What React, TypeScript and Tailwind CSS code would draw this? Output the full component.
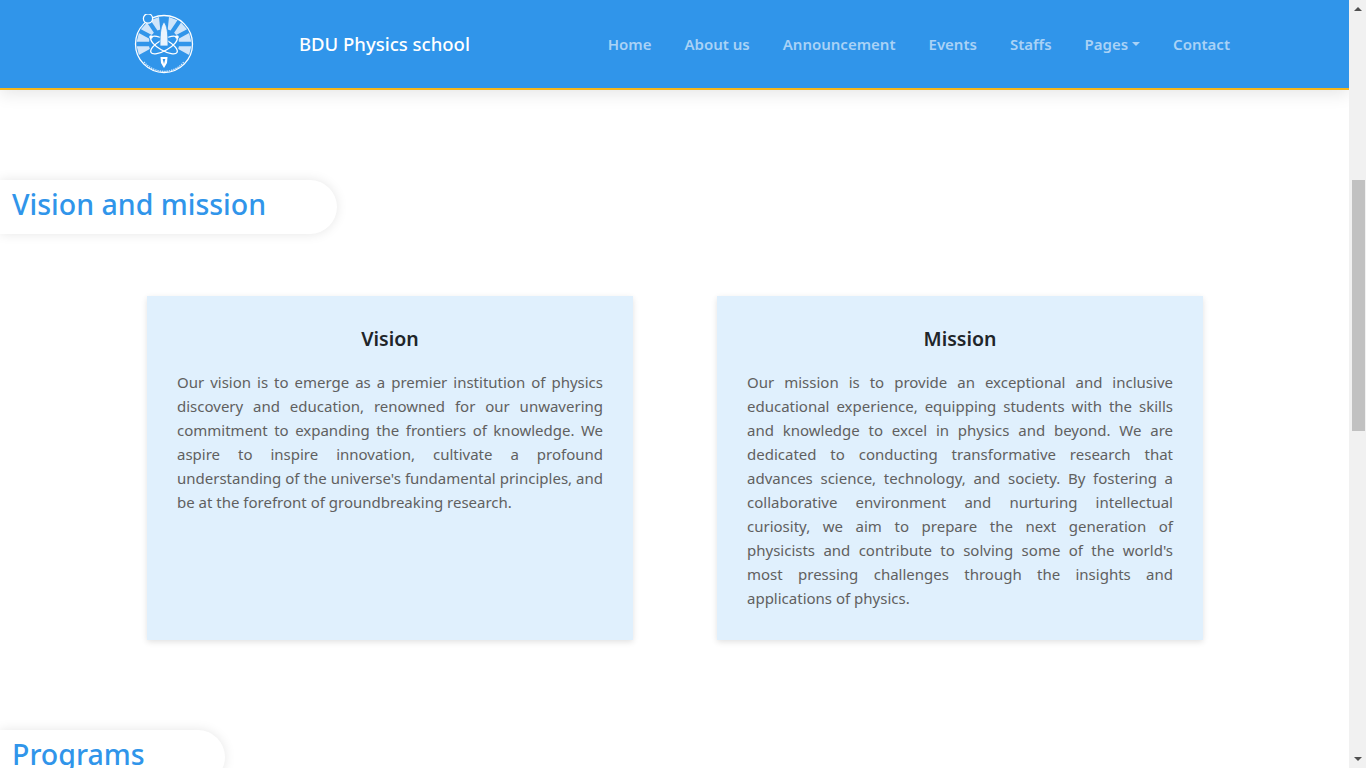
const font = { fontFamily: '"Noto Sans", "Open Sans", sans-serif' };

function Logo() {
  const rays = [-104, -76, -48, -20, 20, 48, 76, 104];
  return (
    <svg width="60" height="60" viewBox="0 0 60 60" fill="none" className="shrink-0">
      <circle cx="30" cy="30" r="28.5" stroke="white" strokeWidth="1.3" />
      {rays.map((a) => (
        <path key={a} d="M28.5 15 L31.5 15 L34.5 3 L25.5 3 Z" fill="#cfe5fa" transform={`rotate(${a} 30 30)`} />
      ))}
      <circle cx="14" cy="4.5" r="4.6" stroke="white" strokeWidth="1.3" fill="#3095ea" />
      <ellipse cx="30" cy="31" rx="15" ry="5.5" stroke="#3095ea" strokeWidth="3" transform="rotate(30 30 31)" />
      <ellipse cx="30" cy="31" rx="15" ry="5.5" stroke="#3095ea" strokeWidth="3" transform="rotate(-30 30 31)" />
      <ellipse cx="30" cy="31" rx="15" ry="5.5" stroke="white" strokeWidth="1.3" transform="rotate(30 30 31)" />
      <ellipse cx="30" cy="31" rx="15" ry="5.5" stroke="white" strokeWidth="1.3" transform="rotate(-30 30 31)" />
      <path d="M30 8 C33 12 34 17 34 32 L26 32 C26 17 27 12 30 8 Z" fill="#eaf4fd" stroke="#3095ea" strokeWidth="0.8" />
      <circle cx="17" cy="23" r="1.8" fill="white" />
      <circle cx="43" cy="23" r="1.8" fill="white" />
      <path d="M26.5 43 L33.5 43 L33 49 L30 54 L27 49 Z" fill="white" />
      <path d="M28.7 45 L31.3 45 L30 50 Z" fill="#3095ea" />
      <path d="M10 48 A26 26 0 0 0 50 48" stroke="#cfe5fa" strokeWidth="1.4" strokeDasharray="1.4 0.9" />
    </svg>
  );
}

function NavLink({ label, caret }: { label: string; caret?: boolean }) {
  return (
    <a className="flex items-center text-[15px] font-semibold text-[#a9d2f6]">
      {label}
      {caret && <span className="ml-[4px] mt-[-1px] border-x-[4px] border-t-[4px] border-x-transparent border-t-[#a9d2f6]" />}
    </a>
  );
}

function Pill({ title, width }: { title: string; width: string }) {
  return (
    <div className={`${width} h-[54px] rounded-r-[27px] bg-white pl-[12px] shadow-[0_0_12px_rgba(0,0,0,0.1)]`}>
      <h2 className="text-[28.5px] font-medium leading-[49px] text-[#3095ea]">{title}</h2>
    </div>
  );
}

function Card({ title, children }: { title: string; children: string }) {
  return (
    <div className="h-[344px] w-[486px] bg-[#e0f0fd] px-[30px] pt-[30px] shadow-[0_2px_6px_rgba(0,0,0,0.12)]">
      <h3 className="mb-[18px] text-center text-[19.5px] font-semibold leading-[26px] text-[#212529]">{title}</h3>
      <p className="text-justify text-[15px] leading-[24px] text-[#606060]">{children}</p>
    </div>
  );
}

export default function App() {
  return (
    <div className="flex h-screen overflow-hidden bg-white" style={font}>
      <div className="flex min-w-0 flex-1 flex-col">
        <header className="flex h-[90px] shrink-0 items-center border-b-2 border-[#f5b61c] bg-[#3095ea] pl-[134px] pr-[119px] shadow-[0_4px_16px_rgba(0,0,0,0.1)]">
          <Logo />
          <span className="ml-[105px] text-[18.5px] font-medium text-white">BDU Physics school</span>
          <nav className="ml-auto flex items-center gap-[33px]">
            <NavLink label="Home" />
            <NavLink label="About us" />
            <NavLink label="Announcement" />
            <NavLink label="Events" />
            <NavLink label="Staffs" />
            <NavLink label="Pages" caret />
            <NavLink label="Contact" />
          </nav>
        </header>
        <main className="flex flex-col pt-[90px]">
          <Pill title="Vision and mission" width="w-[337px]" />
          <div className="mt-[62px] flex gap-[84px] pl-[147px]">
            <Card title="Vision">
              Our vision is to emerge as a premier institution of physics discovery and education, renowned for our unwavering commitment to expanding the frontiers of knowledge. We aspire to inspire innovation, cultivate a profound understanding of the universe's fundamental principles, and be at the forefront of groundbreaking research.
            </Card>
            <Card title="Mission">
              Our mission is to provide an exceptional and inclusive educational experience, equipping students with the skills and knowledge to excel in physics and beyond. We are dedicated to conducting transformative research that advances science, technology, and society. By fostering a collaborative environment and nurturing intellectual curiosity, we aim to prepare the next generation of physicists and contribute to solving some of the world's most pressing challenges through the insights and applications of physics.
            </Card>
          </div>
          <div className="mt-[90px]">
            <Pill title="Programs" width="w-[225px]" />
          </div>
        </main>
      </div>
      <div className="flex w-[17px] shrink-0 flex-col items-center bg-[#f1f1f1]">
        <span className="mt-[7px] border-x-[4px] border-b-[4px] border-x-transparent border-b-[#505050]" />
        <div className="ml-[1px] mt-[169px] h-[251px] w-[13px] bg-[#c1c1c1]" />
        <span className="mb-[7px] mt-auto border-x-[4px] border-t-[4px] border-x-transparent border-t-[#505050]" />
      </div>
    </div>
  );
}
